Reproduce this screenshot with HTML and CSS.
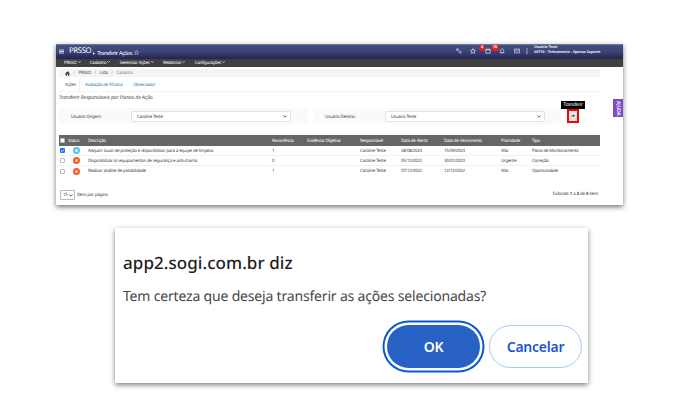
FILE: index.html
```
<!DOCTYPE html>
<html lang="pt-BR">
<head>
  <meta charset="UTF-8">
  <title>Transferir Ações</title>
  <link rel="stylesheet" href="styles.css">
</head>
<body>
  <div class="app">
    <header class="topbar">
      <svg class="menu-icon" viewBox="0 0 6 5"><path d="M0 .7h6M0 2.5h6M0 4.3h6" stroke="#fff" stroke-width=".9"/></svg>
      <span class="brand">PRSSO</span>
      <svg class="arrow" viewBox="0 0 3 4"><path d="M0 0l3 2-3 2z" fill="#fff"/></svg>
      <span class="page-name">Transferir Ações</span>
      <svg class="page-star" viewBox="0 0 16 16"><path d="M8 1.5l2 4.4 4.8.5-3.6 3.2 1 4.8L8 12l-4.2 2.4 1-4.8L1.2 6.4 6 5.9z" fill="none" stroke="#e4e6f0" stroke-width="1.5"/></svg>
      <div class="tools">
        <svg class="tool" viewBox="0 0 16 16"><path d="M1 3h7M1 6h5M3 1v4l3 3M8 9l2-1 3 1 1 3-2 2-3-1z" fill="none" stroke="#d9dcec" stroke-width="1.7"/></svg>
        <svg class="tool star" viewBox="0 0 16 16"><path d="M8 1.5l2 4.4 4.8.5-3.6 3.2 1 4.8L8 12l-4.2 2.4 1-4.8L1.2 6.4 6 5.9z" fill="none" stroke="#e4e6f0" stroke-width="1.8"/></svg>
        <span class="tool-wrap">
          <svg class="tool" viewBox="0 0 16 16"><path d="M2 4h12v10H2zM2 5h12M5 1v3M11 1v3" fill="none" stroke="#d9dcec" stroke-width="2"/></svg>
          <span class="badge">4</span>
        </span>
        <span class="tool-wrap">
          <svg class="tool" viewBox="0 0 16 16"><path d="M2 12c2-2 2-3 2-6 0-5 8-5 8 0 0 3 0 4 2 6zM6 14.5h4" fill="none" stroke="#d9dcec" stroke-width="1.8"/></svg>
          <span class="badge wide">15</span>
        </span>
        <svg class="tool" viewBox="0 0 16 16"><path d="M1 3h14v10H1zM1 4l7 5 7-5" fill="none" stroke="#d9dcec" stroke-width="1.8"/></svg>
        <svg class="tool dots" viewBox="0 0 4 16"><path d="M.5 1h3v3h-3zM.5 6.5h3v3h-3zM.5 12h3v3h-3z" fill="#eef"/></svg>
      </div>
      <div class="user">
        <div>Usuário Teste</div>
        <div>#6710 - Treinamento - Apenas Suporte</div>
      </div>
    </header>

    <nav class="menu">
      <span class="menu-item">PRSSO <svg class="caret" viewBox="0 0 6 4"><path d="M.5.5L3 3 5.5.5"/></svg></span>
      <span class="menu-item">Cadastro <svg class="caret" viewBox="0 0 6 4"><path d="M.5.5L3 3 5.5.5"/></svg></span>
      <span class="menu-item">Gerenciar Ações <svg class="caret" viewBox="0 0 6 4"><path d="M.5.5L3 3 5.5.5"/></svg></span>
      <span class="menu-item">Relatórios <svg class="caret" viewBox="0 0 6 4"><path d="M.5.5L3 3 5.5.5"/></svg></span>
      <span class="menu-item">Configurações <svg class="caret" viewBox="0 0 6 4"><path d="M.5.5L3 3 5.5.5"/></svg></span>
    </nav>

    <div class="content">
      <div class="breadcrumb">
        <svg class="home" viewBox="0 0 16 14"><path d="M8 0L0 7h2v7h4.5V9h3v5H14V7h2l-3-2.6V1h-2v1.7z" fill="#444"/></svg>
        <span class="sep">/</span><span>PRSSO</span>
        <span class="sep">/</span><span>Lista</span>
        <span class="sep">/</span><span class="current">Cadastro</span>
      </div>

      <div class="tabs">
        <span class="tab active">Ações</span>
        <span class="tab">Avaliação de Eficácia</span>
        <span class="tab">Observador</span>
      </div>

      <div class="subtitle">Transferir Responsáveis por Planos de Ação</div>

      <div class="filters">
        <div class="filter">
          <span class="filter-label">Usuário Origem:</span>
          <span class="select">Caroline Teste <svg class="chevron" viewBox="0 0 6 4"><path d="M.5.5L3 3 5.5.5"/></svg></span>
        </div>
        <div class="filter">
          <span class="filter-label">Usuário Destino:</span>
          <span class="select">Usuário Teste <svg class="chevron" viewBox="0 0 6 4"><path d="M.5.5L3 3 5.5.5"/></svg></span>
        </div>
        <div class="transfer">
          <svg class="share" viewBox="0 0 16 14"><path d="M9 1l7 5-7 5V8C5 8 3 9 1 12c0-5 3-8 8-8z" fill="#333"/></svg>
          <span class="tooltip">Transferir</span>
        </div>
      </div>

      <div class="grid">
        <div class="row head">
          <span class="check"></span><span>Status</span><span>Descrição</span><span>Recorrência</span><span>Evidência Objetiva</span><span>Responsável</span><span>Data de Alerta</span><span>Data de Vencimento</span><span>Prioridade</span><span>Tipo</span>
        </div>
        <div class="row">
          <span class="check checked"><svg viewBox="0 0 5 5"><path d="M1 2.5l1.2 1.1L4 1.4" fill="none" stroke="#fff" stroke-width=".8"/></svg></span>
          <span class="status blue"></span><span>Adquirir luvas de proteção e disponibilizar para a equipe de limpeza</span><span>1</span><span></span><span>Caroline Teste</span><span>28/08/2024</span><span>15/09/2024</span><span>Alta</span><span>Plano de Monitoramento</span>
        </div>
        <div class="row">
          <span class="check"></span>
          <span class="status"></span><span>Disponibilizar os equipamentos de segurança e anti-chama</span><span>0</span><span></span><span>Caroline Teste</span><span>05/12/2022</span><span>30/01/2023</span><span>Urgente</span><span>Correção</span>
        </div>
        <div class="row">
          <span class="check"></span>
          <span class="status"></span><span>Realizar análise de potabilidade</span><span>1</span><span></span><span>Caroline Teste</span><span>07/12/2022</span><span>12/12/2022</span><span>Alta</span><span>Oportunidade</span>
        </div>
      </div>

      <div class="pager">
        <span class="page-size">15 <svg class="chevron" viewBox="0 0 6 4"><path d="M.5.5L3 3 5.5.5"/></svg></span>
        <span class="per-page">Itens por página</span>
        <span class="count">Exibindo <b>1</b> a <b>3</b> de <b>3</b> itens</span>
      </div>
    </div>
    <div class="help">AJUDA</div>
  </div>

  <div class="dialog">
    <div class="dialog-title">app2.sogi.com.br diz</div>
    <div class="dialog-text">Tem certeza que deseja transferir as ações selecionadas?</div>
    <div class="dialog-buttons">
      <button class="btn ok">OK</button>
      <button class="btn cancel">Cancelar</button>
    </div>
  </div>
</body>
</html>
```
FILE: styles.css
```
* {
  box-sizing: border-box;
}
body {
  margin: 0;
  padding-top: 44px;
  height: 416px;
  overflow: hidden;
  background: #fff;
  font-family: "Noto Sans", "Open Sans", sans-serif;
  text-rendering: geometricPrecision;
}
.app {
  position: relative;
  width: 567px;
  height: 161px;
  margin-left: 56px;
  background: #fff;
  box-shadow: 0 2px 5px rgba(0, 0, 0, .55);
  font-size: 4.4px;
  letter-spacing: -.26px;
  word-spacing: .3px;
  line-height: 6px;
  color: #444;
  white-space: nowrap;
}
.topbar {
  display: flex;
  align-items: center;
  height: 15px;
  padding-left: 3px;
  border-top: 1px solid #727a9c;
  background: linear-gradient(#435181, #3a4375 50%, #222351);
  color: #fff;
}
.menu-icon {
  width: 5px;
  height: 5px;
  margin-top: -2px;
}
.brand {
  margin: -2px 0 0 5px;
  font-size: 7.8px;
  line-height: 13px;
  letter-spacing: -.4px;
}
.arrow {
  width: 2px;
  height: 3px;
  margin: 2px 2px 0 2px;
}
.page-name {
  padding-top: 1px;
  font-size: 5.6px;
  letter-spacing: -.5px;
}
.page-star {
  width: 5px;
  height: 5px;
  margin: 1px 0 0 2px;
}
.tools {
  display: flex;
  align-items: center;
  gap: 9px;
  position: absolute;
  left: 400px;
  top: 4px;
}
.tool {
  display: block;
  width: 6px;
  height: 6px;
}
.star {
  margin-left: -1px;
}
.dots {
  width: 2px;
  margin-left: -3px;
}
.tool-wrap {
  position: relative;
}
.tool-wrap + .tool-wrap {
  margin-left: -1px;
}
.badge {
  position: absolute;
  left: -6px;
  top: -3px;
  width: 6px;
  height: 6px;
  border-radius: 3px;
  background: #ee2024;
  color: #fff;
  font-size: 3.8px;
  font-weight: bold;
  text-align: center;
}
.wide {
  left: -8px;
  width: 8px;
}
.user {
  position: absolute;
  left: 478px;
  top: 2px;
  font-size: 3.7px;
  font-weight: 600;
  letter-spacing: -.1px;
  line-height: 4.5px;
}
.menu {
  display: flex;
  align-items: center;
  gap: 9.3px;
  height: 8px;
  padding-left: 8px;
  background: #404040;
  color: #fff;
}
.caret,
.chevron {
  width: 3px;
  height: 2px;
  fill: none;
  stroke: currentColor;
  stroke-width: 1.3;
}
.caret {
  vertical-align: 1px;
}
.chevron {
  width: 4px;
  height: 3px;
}
.content {
  padding: 2px 23px 0 3px;
}
.breadcrumb {
  display: flex;
  align-items: center;
  height: 8px;
  padding-left: 6px;
  background: #f4f4f4;
}
.home {
  width: 5px;
  height: 5px;
}
.sep {
  margin: 0 3.6px;
  color: #999;
}
.current {
  color: #888;
}
.tabs {
  display: flex;
  height: 15px;
  padding-top: 1px;
  border-bottom: 1px solid #f4f4f4;
  color: #337ab7;
}
.tab {
  height: 13px;
  padding: 0 5px 0 6px;
  line-height: 15px;
}
.active {
  width: 21px;
  margin-right: -1px;
  border-right: 1px solid #f1f1f1;
  background: #fff;
  color: #555;
}
.subtitle {
  height: 16px;
  padding-top: 3px;
  font-size: 5px;
  letter-spacing: -.24px;
}
.filters {
  display: flex;
  height: 16px;
}
.filter {
  display: flex;
  align-items: center;
  width: 249px;
  margin-right: 5px;
  padding: 1px 0 0 12px;
  background: #fafafa;
}
.filter-label {
  width: 60px;
}
.select {
  display: flex;
  align-items: center;
  justify-content: space-between;
  width: 160px;
  height: 11px;
  padding: 0 3px 0 5px;
  border: 1px solid #e3e3e3;
  border-radius: 2px;
  background: #fff;
}
.transfer {
  position: relative;
  width: 12px;
  height: 14px;
  margin-top: 1px;
  border: 2px solid #f00;
  background: #e6e6e6;
}
.share {
  display: block;
  width: 4px;
  height: 4px;
  margin: 3px auto;
}
.tooltip {
  position: absolute;
  left: -8px;
  top: -10px;
  width: 24px;
  height: 8px;
  background: #000;
  color: #fff;
  font-size: 4.9px;
  line-height: 8px;
  text-align: center;
}
.grid {
  margin-top: 11px;
}
.row {
  display: grid;
  grid-template-columns: 9px 20px 184px 35px 53px 41px 43px 57px 31px 68px;
  align-items: center;
  height: 10px;
  border-bottom: 1px solid #f1f1f1;
}
.row:last-child {
  border-bottom: 0;
}
.head {
  height: 11px;
  border-bottom: 0;
  background: #666;
  color: #fff;
}
.check {
  width: 5px;
  height: 5px;
  margin-left: 1px;
  border: 1px solid #bbb;
  border-radius: 1px;
  background: #fff;
}
.checked {
  border: 0;
  background: #1473e6;
}
.checked svg {
  display: block;
}
.status {
  width: 7px;
  height: 7px;
  margin-left: 5px;
  border: 2px solid #f55a2a;
  border-radius: 50%;
  background: #fbc5b3;
}
.blue {
  border-color: #5bc0f0;
  background: #d8f2ff;
}
.pager {
  display: flex;
  align-items: center;
  margin-top: 14px;
  height: 10px;
}
.page-size {
  display: flex;
  align-items: center;
  justify-content: space-between;
  width: 15px;
  height: 10px;
  margin-left: 1px;
  padding: 0 1px 0 2px;
  border: 1px solid #bbb;
  border-radius: 1px;
}
.per-page {
  margin-left: 2px;
}
.count {
  margin: -3px 2px 0 auto;
}
.help {
  position: absolute;
  right: 0;
  top: 55px;
  width: 10px;
  height: 18px;
  background: #7d4cc9;
  color: #fff;
  font-size: 5px;
  font-weight: 600;
  line-height: 10px;
  text-align: center;
  writing-mode: vertical-rl;
}
.dialog {
  width: 473px;
  height: 155px;
  margin: 23px 0 0 115px;
  padding: 23px 6px 0 8px;
  background: #fff;
  box-shadow: 0 2px 5px rgba(0, 0, 0, .5);
  white-space: nowrap;
}
.dialog-title {
  font-size: 17px;
  font-weight: 500;
  line-height: 24px;
  letter-spacing: .06px;
  color: #1f1f1f;
}
.dialog-text {
  margin-top: 11px;
  font-size: 14px;
  line-height: 22px;
  letter-spacing: -.18px;
  color: #474747;
}
.dialog-buttons {
  display: flex;
  justify-content: flex-end;
  gap: 9px;
  margin-top: 17px;
}
.btn {
  width: 93px;
  height: 43px;
  padding: 0;
  border: 0;
  border-radius: 22px;
  font-family: inherit;
  font-size: 14px;
  font-weight: 600;
}
.ok {
  background: #2862c4;
  box-shadow: 0 0 0 2.5px #fff, 0 0 0 4.5px #0b57d0;
  color: #fff;
  letter-spacing: -.3px;
}
.cancel {
  border: 1.5px solid #a8c7fa;
  background: #fff;
  color: #1b57d0;
  letter-spacing: -.25px;
}
```
